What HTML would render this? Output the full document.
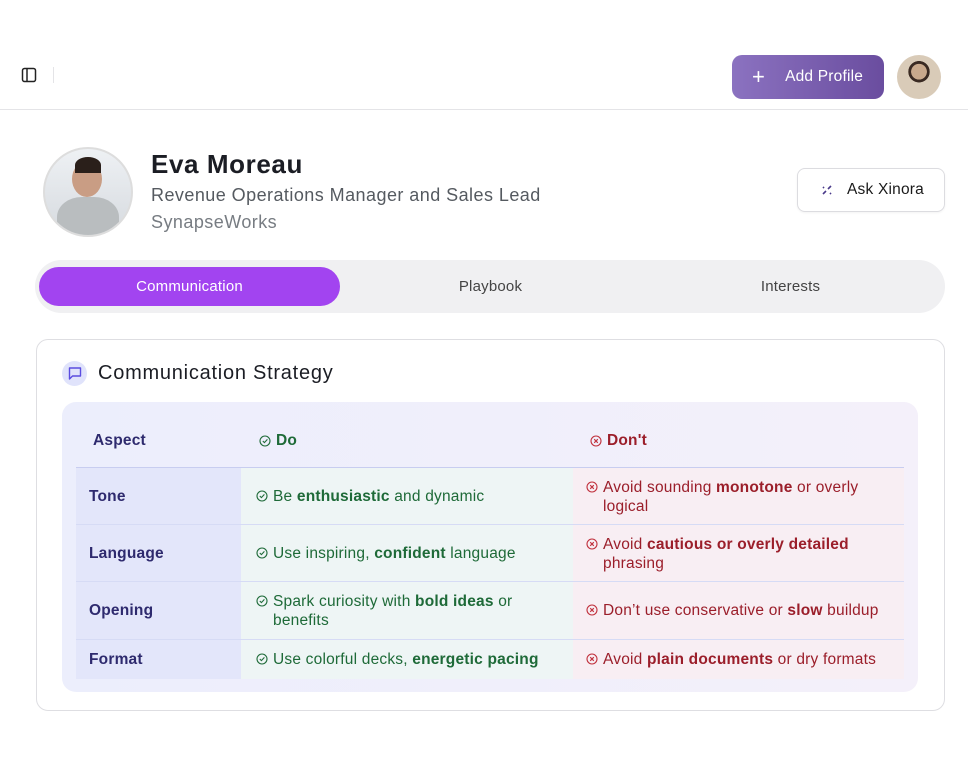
<!DOCTYPE html>
<html><head><meta charset="utf-8"><style>
*{box-sizing:border-box;margin:0;padding:0}
body{width:968px;height:781px;background:#fff;font-family:"Liberation Sans",sans-serif;position:relative;overflow:hidden;color:#1a1a1a;letter-spacing:0.2px}
.abs{position:absolute}
.hdr{left:0;top:0;width:968px;height:110px;border-bottom:1px solid #e4e4e7}
.addbtn{left:732px;top:55px;width:152px;height:44px;border-radius:10px;background:linear-gradient(90deg,#8b72c0,#6a4d9f);color:#fff;font-size:15.5px;display:flex;align-items:center;padding-left:20px}
.addbtn span.p{font-size:22px;font-weight:300;margin-right:20px;line-height:1}
.av{left:897px;top:55px;width:44px;height:44px;border-radius:50%;background:radial-gradient(circle at 50% 38%,#c9a98c 0 22%,#3a2a22 23% 30%,#d9cbb8 31%);overflow:hidden}
.photo{left:43px;top:147px;width:90px;height:90px;border-radius:50%;border:2px solid #ddd;background:linear-gradient(180deg,#eef1f4,#d6dadf);overflow:hidden}
.name{left:151px;top:149px;font-size:26px;font-weight:600;color:#1b1d24;letter-spacing:0.6px}
.title{left:151px;top:185px;font-size:18px;color:#555a60;letter-spacing:0.45px}
.comp{left:151px;top:212px;font-size:18px;color:#777c82;letter-spacing:0.45px}
.ask{left:797px;top:168px;width:148px;height:44px;border:1px solid #dcdce0;border-radius:8px;font-size:15.5px;display:flex;align-items:center;padding-left:49px;box-shadow:0 1px 2px rgba(0,0,0,.05)}
.tabs{left:35px;top:260px;width:910px;height:53px;border-radius:27px;background:#f0f0f2}
.tab{top:267px;width:301px;height:39px;border-radius:20px;font-size:15px;display:flex;align-items:center;justify-content:center;color:#444}
.card{left:36px;top:339px;width:909px;height:372px;border:1px solid #dedee2;border-radius:12px}
.ic{left:62px;top:361px;width:25px;height:25px;border-radius:50%;background:#e0e3fb}
.ct{left:98px;top:362px;font-size:20px;font-weight:500;color:#1b1d24;letter-spacing:0.75px}
.tbl{left:62px;top:402px;width:856px;height:290px;border-radius:14px;background:linear-gradient(90deg,#eceefc,#f4f0fa)}
.cell{position:absolute;font-size:15.5px;display:flex;align-items:center}
.in{display:flex;align-items:flex-start}
.a{left:76px;width:165px;background:#e3e6fa;color:#2e2a6e;font-weight:600;padding-left:13px}
.d{left:241px;width:332px;background:#eef5f5;color:#1e6a38;padding-left:15px}
.n{left:573px;width:331px;background:#f8eef3;color:#9b1e2a;padding-left:13px}
.txt{line-height:19px;white-space:nowrap}
.ln{position:absolute;left:76px;width:828px;height:1px;background:#d6dbf5}
.ico{display:inline-block;width:12px;height:12px;flex:none;margin-right:5px;margin-top:3px}
</style></head><body>
<div class="abs hdr"></div>
<svg class="abs" style="left:21px;top:67px" width="16" height="16" viewBox="0 0 16 16" fill="none" stroke="#222" stroke-width="1.5"><rect x="1.5" y="1.5" width="13" height="13" rx="2"/><path d="M6 2v12"/></svg>
<div class="abs" style="left:53px;top:67px;width:1px;height:16px;background:#e4e4e7"></div>
<div class="abs addbtn"><span class="p">+</span>Add Profile</div>
<div class="abs av"></div>
<div class="abs photo"><div style="position:absolute;left:27px;top:12px;width:30px;height:36px;border-radius:50%;background:#c99d84"></div><div style="position:absolute;left:30px;top:8px;width:26px;height:16px;border-radius:50% 50% 0 0;background:#2a1f1a"></div><div style="position:absolute;left:12px;top:48px;width:62px;height:50px;border-radius:40% 40% 0 0;background:#b9bdbf"></div></div>
<div class="abs name">Eva Moreau</div>
<div class="abs title">Revenue Operations Manager and Sales Lead</div>
<div class="abs comp">SynapseWorks</div>
<div class="abs ask">Ask Xinora</div>
<svg class="abs" style="left:820px;top:183px" width="14" height="14" viewBox="0 0 14 14" stroke="#4a3a8a" stroke-width="1.6" fill="none"><path d="M3 11l3-3M8 6l3-3M3 4l1 1M10 10l1 1"/></svg>
<div class="abs tabs"></div>
<div class="abs tab" style="left:39px;background:#a244f0;color:#fff">Communication</div>
<div class="abs tab" style="left:340px">Playbook</div>
<div class="abs tab" style="left:640px">Interests</div>
<div class="abs card"></div>
<div class="abs ic"></div>
<svg class="abs" style="left:67px;top:365px" width="16" height="16" viewBox="0 0 16 16" fill="none" stroke="#5a4ce0" stroke-width="1.4"><path d="M2.5 3h11v8h-8l-3 3z" stroke-linejoin="round"/></svg>
<div class="abs ct">Communication Strategy</div>
<div class="abs tbl"></div>
<div class="cell" style="left:93px;top:432px;color:#2e2a6e;font-weight:600">Aspect</div>
<div class="cell" style="left:259px;top:432px;color:#1e6a38;font-weight:600"><svg class="ico" style="margin-top:0" viewBox="0 0 12 12" fill="none" stroke="#1e6a38" stroke-width="1.1"><circle cx="6" cy="6" r="5"/><path d="M3.8 6l1.6 1.6 3-3.2"/></svg>Do</div>
<div class="cell" style="left:590px;top:432px;color:#9b1e2a;font-weight:600"><svg class="ico" style="margin-top:0" viewBox="0 0 12 12" fill="none" stroke="#c0303c" stroke-width="1.1"><circle cx="6" cy="6" r="5"/><path d="M4.2 4.2l3.6 3.6M7.8 4.2l-3.6 3.6"/></svg>Don't</div>
<div class="ln" style="top:467px;background:#c8cdf0"></div>

<div class="cell a" style="top:468px;height:57px">Tone</div>
<div class="cell d" style="top:468px;height:57px"><div class="in"><svg class="ico" viewBox="0 0 12 12" fill="none" stroke="#1e6a38" stroke-width="1.1"><circle cx="6" cy="6" r="5"/><path d="M3.8 6l1.6 1.6 3-3.2"/></svg><span class="txt">Be <b>enthusiastic</b> and dynamic</span></div></div>
<div class="cell n" style="top:468px;height:57px"><div class="in"><svg class="ico" viewBox="0 0 12 12" fill="none" stroke="#c0303c" stroke-width="1.1"><circle cx="6" cy="6" r="5"/><path d="M4.2 4.2l3.6 3.6M7.8 4.2l-3.6 3.6"/></svg><span class="txt">Avoid sounding <b>monotone</b> or overly<br>logical</span></div></div>
<div class="ln" style="top:524px"></div>

<div class="cell a" style="top:525px;height:57px">Language</div>
<div class="cell d" style="top:525px;height:57px"><div class="in"><svg class="ico" viewBox="0 0 12 12" fill="none" stroke="#1e6a38" stroke-width="1.1"><circle cx="6" cy="6" r="5"/><path d="M3.8 6l1.6 1.6 3-3.2"/></svg><span class="txt">Use inspiring, <b>confident</b> language</span></div></div>
<div class="cell n" style="top:525px;height:57px"><div class="in"><svg class="ico" viewBox="0 0 12 12" fill="none" stroke="#c0303c" stroke-width="1.1"><circle cx="6" cy="6" r="5"/><path d="M4.2 4.2l3.6 3.6M7.8 4.2l-3.6 3.6"/></svg><span class="txt">Avoid <b>cautious or overly detailed</b><br>phrasing</span></div></div>
<div class="ln" style="top:581px"></div>

<div class="cell a" style="top:582px;height:57px">Opening</div>
<div class="cell d" style="top:582px;height:57px"><div class="in"><svg class="ico" viewBox="0 0 12 12" fill="none" stroke="#1e6a38" stroke-width="1.1"><circle cx="6" cy="6" r="5"/><path d="M3.8 6l1.6 1.6 3-3.2"/></svg><span class="txt">Spark curiosity with <b>bold ideas</b> or<br>benefits</span></div></div>
<div class="cell n" style="top:582px;height:57px"><div class="in"><svg class="ico" viewBox="0 0 12 12" fill="none" stroke="#c0303c" stroke-width="1.1"><circle cx="6" cy="6" r="5"/><path d="M4.2 4.2l3.6 3.6M7.8 4.2l-3.6 3.6"/></svg><span class="txt">Don’t use conservative or <b>slow</b> buildup</span></div></div>
<div class="ln" style="top:639px"></div>

<div class="cell a" style="top:640px;height:39px">Format</div>
<div class="cell d" style="top:640px;height:39px"><div class="in"><svg class="ico" viewBox="0 0 12 12" fill="none" stroke="#1e6a38" stroke-width="1.1"><circle cx="6" cy="6" r="5"/><path d="M3.8 6l1.6 1.6 3-3.2"/></svg><span class="txt">Use colorful decks, <b>energetic pacing</b></span></div></div>
<div class="cell n" style="top:640px;height:39px"><div class="in"><svg class="ico" viewBox="0 0 12 12" fill="none" stroke="#c0303c" stroke-width="1.1"><circle cx="6" cy="6" r="5"/><path d="M4.2 4.2l3.6 3.6M7.8 4.2l-3.6 3.6"/></svg><span class="txt">Avoid <b>plain documents</b> or dry formats</span></div></div>
</body></html>
